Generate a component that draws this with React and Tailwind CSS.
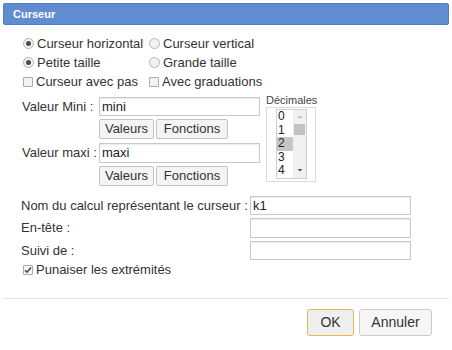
import React from 'react';

function Radio({ checked }) {
  return (
    <span className="w-[11px] h-[11px] rounded-full border border-[#b4b4b4] bg-[#f2f2f2] flex items-center justify-center shrink-0">
      {checked && <span className="w-[5px] h-[5px] rounded-full bg-[#4a4a4a]" />}
    </span>
  );
}

function Checkbox({ checked }) {
  return (
    <span className="w-[10px] h-[10px] rounded-[1px] border border-[#aaaaaa] bg-[#f3f3f3] flex items-center justify-center shrink-0">
      {checked && (
        <svg width="8" height="8" viewBox="0 0 8 8">
          <path d="M1 4.2 L3 6.2 L7 1.5" fill="none" stroke="#444" strokeWidth="1.5" />
        </svg>
      )}
    </span>
  );
}

function Option({ type, checked, label }) {
  return (
    <div className="flex items-center h-[19px] gap-[3px]">
      {type === 'radio' ? <Radio checked={checked} /> : <Checkbox checked={checked} />}
      <span>{label}</span>
    </div>
  );
}

function Btn({ children, w }) {
  return (
    <button className={`h-[20px] ${w} border border-[#c4c4c4] bg-[#f4f4f4] rounded-[2px] text-[13px] text-[#333] flex items-center justify-center`}>
      {children}
    </button>
  );
}

function Field({ value, h = 'h-[19px]' }) {
  return (
    <div className={`w-[161px] ${h} border border-[#c8c8c8] shadow-[inset_0_1px_1px_rgba(0,0,0,0.08)] bg-white px-[2px] flex items-center text-[13px] text-[#222]`}>
      {value}
    </div>
  );
}

export default function App() {
  const decimals = ['0', '1', '2', '3', '4'];
  return (
    <div className="w-[452px] h-[350px] bg-white font-['Liberation_Sans',Arial,sans-serif] text-[13px] text-[#333] flex flex-col">
      <div className="mx-[3px] mt-[3px] h-[22px] bg-[#5f8dcf] border border-[#4f7fc5] rounded-[2px] flex items-center pl-[9px] text-white font-bold text-[11px]">
        Curseur
      </div>

      <div className="mt-[9px] pl-[23px] grid grid-cols-[126px_auto]">
        <Option type="radio" checked label="Curseur horizontal" />
        <Option type="radio" label="Curseur vertical" />
        <Option type="radio" checked label="Petite taille" />
        <Option type="radio" label="Grande taille" />
        <Option type="check" label="Curseur avec pas" />
        <Option type="check" label="Avec graduations" />
      </div>

      <div className="mt-[6px] pl-[22px] flex">
        <div className="flex flex-col">
          <div className="flex items-center">
            <span className="w-[77px]">Valeur Mini :</span>
            <Field value="mini" />
          </div>
          <div className="flex gap-[2px] ml-[77px] mt-[2px]">
            <Btn w="w-[55px]">Valeurs</Btn>
            <Btn w="w-[72px]">Fonctions</Btn>
          </div>
          <div className="flex items-center mt-[4px]">
            <span className="w-[77px]">Valeur maxi :</span>
            <Field value="maxi" h="h-[20px]" />
          </div>
          <div className="flex gap-[2px] ml-[77px] mt-[3px]">
            <Btn w="w-[55px]">Valeurs</Btn>
            <Btn w="w-[72px]">Fonctions</Btn>
          </div>
        </div>

        <div className="ml-[6px] -mt-[3px] flex flex-col">
          <span className="text-[11px] leading-[12px] text-[#444]">Décimales</span>
          <div className="mt-[1px] w-[50px] h-[75px] border border-[#dcdcdc] bg-white pl-[9px] pt-[1px]">
            <div className="w-[31px] h-[70px] border border-[#d0d0d0] flex">
              <div className="w-[16px] flex flex-col">
                {decimals.map((d) => (
                  <div
                    key={d}
                    className={`h-[13.6px] leading-[13.6px] pl-[1px] text-[12px] text-[#222] ${d === '2' ? 'bg-[#c6c6c6]' : ''}`}
                  >
                    {d}
                  </div>
                ))}
              </div>
              <div className="flex-1 bg-[#f0f0f0] flex flex-col items-center">
                <svg width="6" height="10" viewBox="0 0 6 10" className="mt-[3px]">
                  <path d="M0.5 5 L3 2.5 L5.5 5 Z" fill="#b8b8b8" />
                </svg>
                <div className="w-[11px] h-[11px] bg-[#c2c2c2] mt-[1px]" />
                <div className="flex-1" />
                <svg width="6" height="10" viewBox="0 0 6 10" className="mb-[3px]">
                  <path d="M0.5 4 L3 6.5 L5.5 4 Z" fill="#505050" />
                </svg>
              </div>
            </div>
          </div>
        </div>
      </div>

      <div className="mt-[10px] pl-[21px] flex flex-col gap-[3px]">
        <div className="flex items-center">
          <span className="w-[229px]">Nom du calcul représentant le curseur :</span>
          <Field value="k1" />
        </div>
        <div className="flex items-center">
          <span className="w-[229px]">En-tête :</span>
          <Field value="" h="h-[20px]" />
        </div>
        <div className="flex items-center">
          <span className="w-[229px]">Suivi de :</span>
          <Field value="" />
        </div>
      </div>

      <div className="mt-[1px] pl-[23px] flex items-center h-[17px] gap-[3px]">
        <Checkbox checked />
        <span>Punaiser les extrémités</span>
      </div>

      <div className="mx-[3px] mt-[19px] h-px bg-[#e5e5e5]" />

      <div className="mt-[10px] pr-[20px] flex justify-end gap-[5px]">
        <button className="w-[47px] h-[27px] border border-[#e8b45a] bg-[#efefef] rounded-[3px] text-[14px] text-[#333]">
          OK
        </button>
        <button className="w-[73px] h-[27px] border border-[#cccccc] bg-[#f6f6f6] rounded-[3px] text-[14px] text-[#333]">
          Annuler
        </button>
      </div>
    </div>
  );
}
